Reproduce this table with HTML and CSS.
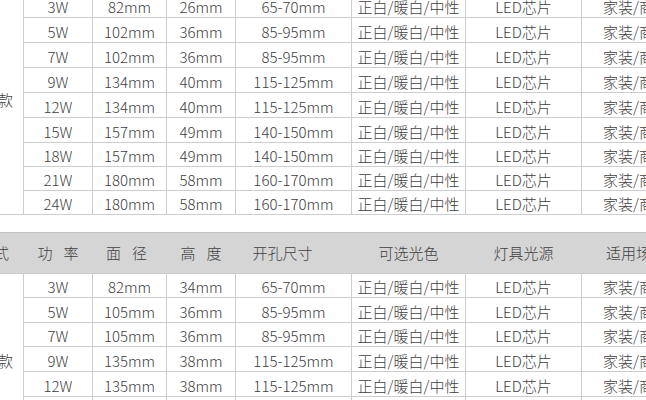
FILE: index.html
```html
<!DOCTYPE html>
<html lang="zh-CN">
<head>
<meta charset="utf-8">
<title>LED 规格表</title>
<link rel="stylesheet" href="styles.css">
</head>
<body>
<div class="page">
  <div class="grid grid-a">
    <div class="cell kind kind-a">款</div>
    <div class="cell">3W</div><div class="cell">82mm</div><div class="cell">26mm</div><div class="cell">65-70mm</div><div class="cell">正白/暖白/中性</div><div class="cell">LED芯片</div><div class="cell use">家装/商用</div>
    <div class="cell">5W</div><div class="cell">102mm</div><div class="cell">36mm</div><div class="cell">85-95mm</div><div class="cell">正白/暖白/中性</div><div class="cell">LED芯片</div><div class="cell use">家装/商用</div>
    <div class="cell">7W</div><div class="cell">102mm</div><div class="cell">36mm</div><div class="cell">85-95mm</div><div class="cell">正白/暖白/中性</div><div class="cell">LED芯片</div><div class="cell use">家装/商用</div>
    <div class="cell">9W</div><div class="cell">134mm</div><div class="cell">40mm</div><div class="cell">115-125mm</div><div class="cell">正白/暖白/中性</div><div class="cell">LED芯片</div><div class="cell use">家装/商用</div>
    <div class="cell">12W</div><div class="cell">134mm</div><div class="cell">40mm</div><div class="cell">115-125mm</div><div class="cell">正白/暖白/中性</div><div class="cell">LED芯片</div><div class="cell use">家装/商用</div>
    <div class="cell">15W</div><div class="cell">157mm</div><div class="cell">49mm</div><div class="cell">140-150mm</div><div class="cell">正白/暖白/中性</div><div class="cell">LED芯片</div><div class="cell use">家装/商用</div>
    <div class="cell">18W</div><div class="cell">157mm</div><div class="cell">49mm</div><div class="cell">140-150mm</div><div class="cell">正白/暖白/中性</div><div class="cell">LED芯片</div><div class="cell use">家装/商用</div>
    <div class="cell">21W</div><div class="cell">180mm</div><div class="cell">58mm</div><div class="cell">160-170mm</div><div class="cell">正白/暖白/中性</div><div class="cell">LED芯片</div><div class="cell use">家装/商用</div>
    <div class="cell">24W</div><div class="cell">180mm</div><div class="cell">58mm</div><div class="cell">160-170mm</div><div class="cell">正白/暖白/中性</div><div class="cell">LED芯片</div><div class="cell use">家装/商用</div>
  </div>

  <div class="grid grid-b">
    <div class="head">
      <div class="hcell hkind">款式</div>
      <div class="hcell"><span class="spaced">功率</span></div>
      <div class="hcell hdia"><span class="spaced">面径</span></div>
      <div class="hcell"><span class="spaced">高度</span></div>
      <div class="hcell hole">开孔尺寸</div>
      <div class="hcell">可选光色</div>
      <div class="hcell">灯具光源</div>
      <div class="hcell hplace">适用场所</div>
    </div>
    <div class="cell kind kind-b">款</div>
    <div class="cell">3W</div><div class="cell">82mm</div><div class="cell">34mm</div><div class="cell">65-70mm</div><div class="cell">正白/暖白/中性</div><div class="cell">LED芯片</div><div class="cell use">家装/商用</div>
    <div class="cell">5W</div><div class="cell">105mm</div><div class="cell">36mm</div><div class="cell">85-95mm</div><div class="cell">正白/暖白/中性</div><div class="cell">LED芯片</div><div class="cell use">家装/商用</div>
    <div class="cell">7W</div><div class="cell">105mm</div><div class="cell">36mm</div><div class="cell">85-95mm</div><div class="cell">正白/暖白/中性</div><div class="cell">LED芯片</div><div class="cell use">家装/商用</div>
    <div class="cell">9W</div><div class="cell">135mm</div><div class="cell">38mm</div><div class="cell">115-125mm</div><div class="cell">正白/暖白/中性</div><div class="cell">LED芯片</div><div class="cell use">家装/商用</div>
    <div class="cell">12W</div><div class="cell">135mm</div><div class="cell">38mm</div><div class="cell">115-125mm</div><div class="cell">正白/暖白/中性</div><div class="cell">LED芯片</div><div class="cell use">家装/商用</div>
    <div class="cell">15W</div><div class="cell">157mm</div><div class="cell">40mm</div><div class="cell">140-150mm</div><div class="cell">正白/暖白/中性</div><div class="cell">LED芯片</div><div class="cell use">家装/商用</div>
  </div>
</div>
</body>
</html>
```

FILE: styles.css
```css
html, body {
  margin: 0;
  padding: 0;
  background: #ffffff;
  overflow: hidden;
}

.page {
  width: 646px;
  height: 400px;
  overflow: hidden;
  font-family: "Noto Sans CJK SC", "Noto Sans", sans-serif;
  font-size: 15px;
  font-weight: 300;
  color: #404040;
}

.grid {
  display: grid;
  grid-template-columns: 59px 68px 73px 68px 115px 113px 115px 140px;
  column-gap: 1px;
  row-gap: 1px;
  background: #cdcdcd;
  margin-left: -36px;
  width: 758px;
}

.grid-a {
  margin-top: -7px;
  padding-bottom: 1px;
  grid-template-rows: 24px 24px 24px 24px 24px 24px 23px 23px 23px;
}

.grid-b {
  margin-top: 17px;
  grid-template-rows: 41px 23px 24px 23px 24px 24px 24px 24px;
}

.cell {
  background: #ffffff;
  display: flex;
  align-items: center;
  justify-content: center;
  white-space: nowrap;
  line-height: 1;
  padding-top: 2px;
  box-sizing: border-box;
}

.use {
  justify-content: flex-start;
  padding-left: 21px;
}

.kind {
  justify-content: flex-end;
  padding-right: 10px;
}

.kind-a {
  grid-row: 1 / span 9;
  padding-top: 0;
  padding-bottom: 8px;
  align-items: center;
}

.kind-b {
  grid-row: 2 / span 7;
  align-items: flex-start;
  padding-top: 79px;
}

.head {
  grid-column: 1 / -1;
  display: grid;
  grid-template-columns: 59px 68px 73px 68px 115px 113px 115px 140px;
  column-gap: 1px;
  background: #d5d5d5;
  border-top: 1px solid #c4c4c4;
  box-sizing: border-box;
}

.hcell {
  display: flex;
  align-items: center;
  justify-content: center;
  white-space: nowrap;
  line-height: 1;
  padding-bottom: 1px;
}

.hkind {
  justify-content: flex-end;
  padding-right: 14px;
}

.hdia {
  padding-right: 6px;
}

.hole {
  padding-right: 22px;
}

.hplace {
  justify-content: flex-start;
  padding-left: 24px;
}

.spaced {
  letter-spacing: 11px;
  margin-right: -11px;
}
```
